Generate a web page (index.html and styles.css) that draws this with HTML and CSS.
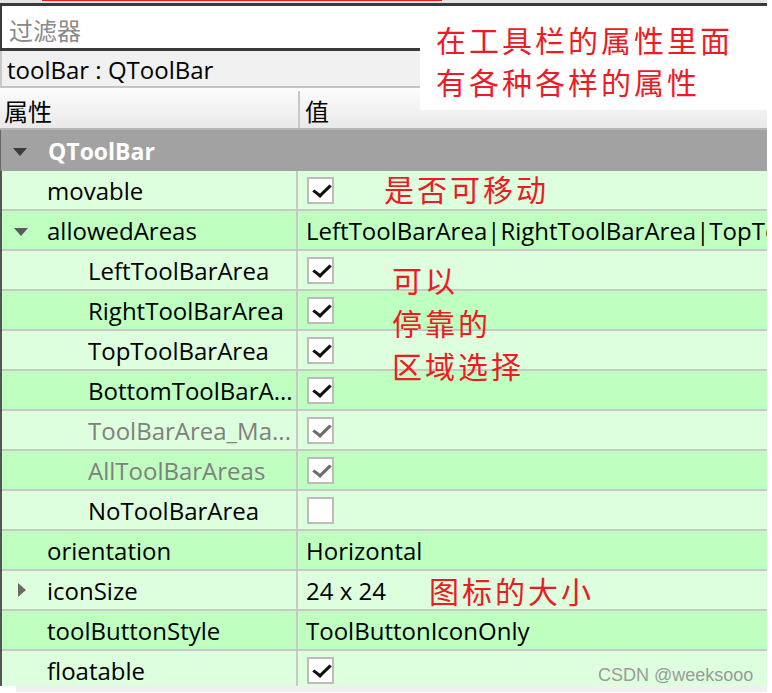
FILE: index.html
```html
<!DOCTYPE html>
<html>
	<head>
		<meta charset="UTF-8">
		<title>属性编辑器</title>
		<link rel="stylesheet" href="styles.css">
	</head>
	<body>
		<div id="editor">
			<div class="topline"><span class="redline"></span></div>
			<div class="filter">过滤器</div>
			<div class="objname">toolBar : QToolBar</div>
			<div class="head">
				<div class="name">属性</div>
				<div class="val">值</div>
			</div>
			<div class="group"><span class="arrow-down dark"></span>QToolBar</div>

			<div class="tree">
				<div class="row light">
					<div class="name lv1">movable</div>
					<div class="val"><span class="chk on"></span></div>
				</div>
				<div class="row dark">
					<div class="name lv1"><span class="arrow-down"></span>allowedAreas</div>
					<div class="val">LeftToolBarArea|RightToolBarArea|TopTo</div>
				</div>
				<div class="row light">
					<div class="name lv2">LeftToolBarArea</div>
					<div class="val"><span class="chk on"></span></div>
				</div>
				<div class="row dark">
					<div class="name lv2">RightToolBarArea</div>
					<div class="val"><span class="chk on"></span></div>
				</div>
				<div class="row light">
					<div class="name lv2">TopToolBarArea</div>
					<div class="val"><span class="chk on"></span></div>
				</div>
				<div class="row dark">
					<div class="name lv2">BottomToolBarA...</div>
					<div class="val"><span class="chk on"></span></div>
				</div>
				<div class="row light off">
					<div class="name lv2">ToolBarArea_Ma...</div>
					<div class="val"><span class="chk on grey"></span></div>
				</div>
				<div class="row dark off">
					<div class="name lv2">AllToolBarAreas</div>
					<div class="val"><span class="chk on grey"></span></div>
				</div>
				<div class="row light">
					<div class="name lv2">NoToolBarArea</div>
					<div class="val"><span class="chk"></span></div>
				</div>
				<div class="row dark">
					<div class="name lv1">orientation</div>
					<div class="val">Horizontal</div>
				</div>
				<div class="row light">
					<div class="name lv1"><span class="arrow-right"></span>iconSize</div>
					<div class="val">24 x 24</div>
				</div>
				<div class="row dark">
					<div class="name lv1">toolButtonStyle</div>
					<div class="val">ToolButtonIconOnly</div>
				</div>
				<div class="row light">
					<div class="name lv1">floatable</div>
					<div class="val"><span class="chk on"></span></div>
				</div>
			</div>
			<div class="bottom"></div>
		</div>

		<!-- 标注 -->
		<div class="note note-top">在工具栏的属性里面<br>有各种各样的属性</div>
		<div class="note note-move">是否可移动</div>
		<div class="note note-area">可以<br>停靠的<br>区域选择</div>
		<div class="note note-size">图标的大小</div>
		<div class="mark">CSDN @weeksooo</div>
	</body>
</html>
```

FILE: styles.css
```css
* {
	margin: 0;
	padding: 0;
	box-sizing: border-box;
}

body {
	background: #fff;
	font-family: "Open Sans", "Noto Sans CJK SC", sans-serif;
	font-size: 24px;
	color: #000;
	position: relative;
	width: 772px;
	height: 693px;
	overflow: hidden;
}

#editor {
	width: 767px;
}

.topline {
	height: 3px;
	background: #e4e4e4;
	position: relative;
}

.redline {
	position: absolute;
	left: 42px;
	top: 0;
	width: 400px;
	height: 1px;
	background: #e0201c;
}

.filter {
	height: 48px;
	background: #fff;
	border-top: 3px solid #3a3a3a;
	border-left: 2px solid #3a3a3a;
	border-bottom: 3px solid #3a3a3a;
	color: #8a8a8a;
	font-family: "Noto Sans CJK SC", sans-serif;
	font-size: 24px;
	line-height: 42px;
	padding: 3px 0 0 7px;
}

.objname {
	height: 37px;
	background: #f0f0f0;
	border-left: 2px solid #c8c8c8;
	border-bottom: 2px solid #c4c4c4;
	line-height: 34px;
	padding: 2px 0 0 5px;
}

.head {
	display: flex;
	height: 42px;
	background: linear-gradient(#fdfdfd, #e9e9e9);
	border-bottom: 2px solid #b4b4b4;
	font-family: "Noto Sans CJK SC", sans-serif;
	font-size: 24px;
}

.head .name {
	width: 300px;
	padding: 2px 0 0 4px;
	border-right: 2px solid #c8c8c8;
	margin-top: 3px;
}

.head .val {
	padding: 2px 0 0 5px;
	margin-top: 3px;
}

.group {
	height: 41px;
	background: #a2a2a2;
	color: #fff;
	font-weight: bold;
	font-size: 23px;
	display: flex;
	align-items: center;
	padding-left: 47px;
	position: relative;
	border-left: 1px solid #666;
}

.tree {
	height: 515px;
	overflow: hidden;
	border-left: 2px solid #555;
}

.row {
	display: flex;
	height: 40px;
	border-bottom: 2px solid #c8c8c8;
}

.row.light {
	background: #ddffdd;
}

.row.dark {
	background: #bfffbf;
}

.row .name {
	width: 296px;
	flex: none;
	border-right: 2px solid #c8c8c8;
	display: flex;
	align-items: center;
	position: relative;
	white-space: nowrap;
}

.row .name.lv1 {
	padding-left: 45px;
}

.row .name.lv2 {
	padding-left: 86px;
}

.row.off .name {
	color: #808080;
}

.row .val {
	flex: 1;
	display: flex;
	align-items: center;
	padding-left: 8px;
	white-space: nowrap;
	overflow: hidden;
}

.arrow-down {
	position: absolute;
	left: 12px;
	top: 17px;
	width: 0;
	height: 0;
	border-left: 7px solid transparent;
	border-right: 7px solid transparent;
	border-top: 8px solid #5a5a5a;
}

.group .arrow-down {
	left: 12px;
	top: 18px;
}

.arrow-down.dark {
	border-top-color: #3c3c3c;
}

.arrow-right {
	position: absolute;
	left: 16px;
	top: 12px;
	width: 0;
	height: 0;
	border-top: 7px solid transparent;
	border-bottom: 7px solid transparent;
	border-left: 8px solid #6a6a6a;
}

.chk {
	width: 27px;
	height: 27px;
	border: 2px solid #bcbcbc;
	background: #fff;
	position: relative;
	margin-left: 1px;
}

.chk.on::after {
	content: "";
	position: absolute;
	left: 8px;
	top: 2px;
	width: 7px;
	height: 13px;
	border-right: 3px solid #111;
	border-bottom: 3px solid #111;
	transform: rotate(38deg) skewX(-8deg);
	transform-origin: center;
}

.chk.grey::after {
	border-color: #6c6c6c;
}

.bottom {
	height: 6px;
	margin-left: 16px;
	background: #f0f0f0;
}

.note {
	position: absolute;
	color: #ee1a24;
	font-family: "Noto Sans CJK SC", sans-serif;
	font-size: 30px;
	letter-spacing: 3px;
}

.note-top {
	left: 420px;
	top: 6px;
	width: 347px;
	height: 104px;
	background: #fff;
	padding: 12px 0 0 16px;
	line-height: 42px;
}

.note-move {
	left: 384px;
	top: 166px;
}

.note-area {
	left: 392px;
	top: 258px;
	line-height: 43px;
}

.note-size {
	left: 429px;
	top: 568px;
}

.mark {
	position: absolute;
	left: 598px;
	top: 665px;
	font-family: "Liberation Sans", sans-serif;
	font-size: 18px;
	color: #9a9a9a;
}
```
